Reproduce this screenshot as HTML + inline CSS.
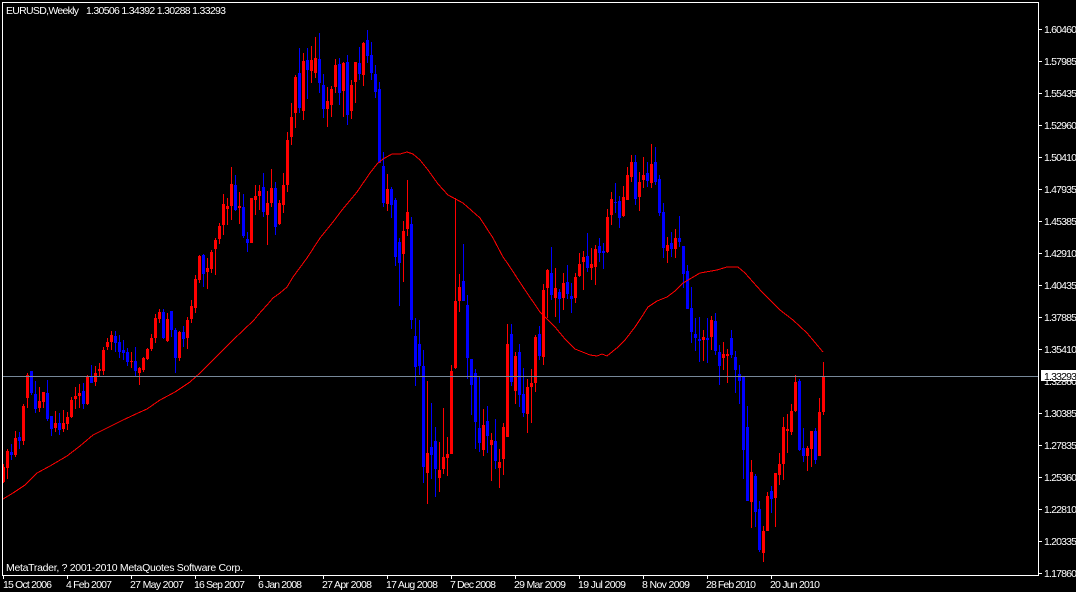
<!DOCTYPE html>
<html><head><meta charset="utf-8"><title>EURUSD,Weekly</title>
<style>
html,body{margin:0;padding:0;background:#000;width:1076px;height:592px;overflow:hidden}
svg{display:block;position:absolute;left:0;top:0}
text{font-family:"Liberation Sans",sans-serif;font-size:10.5px;fill:#fff}
</style></head><body>
<svg width="1076" height="592" viewBox="0 0 1076 592" shape-rendering="crispEdges">
<rect width="1076" height="592" fill="#000"/>
<!-- red wicks -->
<path fill="none" stroke="#f00" stroke-width="1" d="M3.5 464V483M7.5 449V479M15.5 431V457M23.5 404V445M27.5 373V408M39.5 387V412M43.5 392V408M55.5 411V432M63.5 410V432M67.5 412V430M71.5 397V418M75.5 387V409M79.5 384V408M87.5 375V405M95.5 366V386M99.5 363V377M103.5 347V375M107.5 338V350M111.5 331V350M131.5 352V368M139.5 367V385M143.5 357V372M147.5 348V360M151.5 334V351M155.5 314V343M159.5 309V323M167.5 313V342M179.5 331V361M187.5 317V349M191.5 300V323M195.5 275V313M199.5 255V283M207.5 258V289M211.5 250V273M215.5 238V275M219.5 223V244M223.5 194V235M227.5 198V225M231.5 167V220M239.5 192V224M251.5 198V243M255.5 185V215M259.5 185V210M267.5 191V245M271.5 169V207M279.5 200V225M283.5 173V213M287.5 132V192M291.5 103V145M295.5 75V128M303.5 53V120M311.5 46V83M315.5 37V78M327.5 87V127M331.5 86V117M335.5 59V93M343.5 62V117M351.5 80V119M355.5 62V103M363.5 42V86M387.5 174V211M403.5 221V282M407.5 180V236M427.5 381V504M439.5 442V492M443.5 408V474M447.5 437V476M451.5 365V454M455.5 198V369M459.5 274V312M483.5 409V456M491.5 433V481M499.5 449V488M503.5 423V475M507.5 324V437M515.5 352V404M527.5 379V433M531.5 369V423M535.5 335V392M543.5 284V365M547.5 269V318M555.5 268V317M563.5 273V310M575.5 273V303M579.5 253V277M583.5 251V290M591.5 248V280M595.5 245V285M607.5 209V253M611.5 192V225M623.5 186V217M627.5 167V200M631.5 155V182M639.5 172V211M643.5 157V188M651.5 144V188M667.5 237V263M675.5 229V258M703.5 330V361M711.5 316V350M723.5 342V370M727.5 349V383M751.5 460V528M763.5 526V562M767.5 492V531M775.5 473V527M779.5 453V485M783.5 417V480M787.5 414V453M791.5 404V435M795.5 375V412M807.5 446V471M811.5 431V467M819.5 398V456M823.5 362V415"/>
<!-- red bodies -->
<path fill="none" stroke="#f00" stroke-width="3" d="M3.5 467V482M7.5 451V468M15.5 438V455M23.5 406V441M27.5 375V398M39.5 401V408M43.5 392V402M55.5 423V428M63.5 423V429M67.5 417V424M71.5 400V417M75.5 396V399M79.5 393V396M87.5 377V404M95.5 373V382M99.5 369V371M103.5 350V371M107.5 342V347M111.5 335V342M131.5 361V362M139.5 368V373M143.5 358V370M147.5 349V359M151.5 338V349M155.5 318V338M159.5 312V319M167.5 319V341M179.5 332V358M187.5 320V338M191.5 306V319M195.5 279V308M199.5 256V280M207.5 268V272M211.5 252V269M215.5 240V249M219.5 226V239M223.5 204V225M227.5 206V209M231.5 184V206M239.5 206V208M251.5 198V243M255.5 196V200M259.5 191V196M267.5 203V215M271.5 188V203M279.5 203V224M283.5 185V205M287.5 140V185M291.5 117V137M295.5 77V113M303.5 61V111M311.5 60V71M315.5 58V73M327.5 101V109M331.5 89V105M335.5 65V87M343.5 63V91M351.5 85V111M355.5 62V82M363.5 43V75M387.5 189V204M403.5 231V254M407.5 212V229M427.5 453V473M439.5 470V478M443.5 457V469M447.5 454V458M451.5 371V454M455.5 301V368M459.5 287V301M483.5 425V450M491.5 440V445M499.5 462V468M503.5 427V459M507.5 344V437M515.5 356V391M527.5 387V414M531.5 383V387M535.5 337V383M543.5 290V357M547.5 270V288M555.5 288V298M563.5 283V298M575.5 277V298M579.5 264V276M583.5 257V262M591.5 264V268M595.5 249V267M607.5 217V252M611.5 199V215M623.5 197V216M627.5 175V200M631.5 162V177M639.5 182V197M643.5 175V180M651.5 164V183M667.5 245V251M675.5 238V249M703.5 337V340M711.5 320V337M723.5 354V358M727.5 354V356M751.5 472V502M763.5 531V553M767.5 496V531M775.5 473V498M779.5 464V475M783.5 427V464M787.5 429V431M791.5 411V432M795.5 382V411M807.5 448V456M811.5 431V449M819.5 412V456M823.5 376V412"/>
<!-- blue wicks -->
<path fill="none" stroke="#00f" stroke-width="1" d="M11.5 444V460M19.5 432V449M31.5 371V395M35.5 381V413M47.5 380V421M51.5 416V436M59.5 413V435M83.5 383V409M91.5 365V383M115.5 331V352M119.5 335V358M123.5 340V360M127.5 348V366M135.5 347V377M163.5 309V339M171.5 311V337M175.5 328V373M183.5 326V347M203.5 254V287M235.5 175V211M243.5 194V238M247.5 232V252M263.5 173V217M275.5 182V235M299.5 48V113M307.5 48V99M319.5 33V93M323.5 74V118M339.5 58V105M347.5 55V125M359.5 47V80M367.5 30V63M371.5 42V80M375.5 65V98M379.5 82V163M383.5 152V207M391.5 187V218M395.5 198V266M399.5 238V306M411.5 217V329M415.5 318V386M419.5 320V375M423.5 350V483M431.5 403V479M435.5 427V497M463.5 244V301M467.5 295V379M471.5 359V415M475.5 369V449M479.5 377V452M487.5 406V453M495.5 419V469M511.5 324V386M519.5 344V407M523.5 368V417M539.5 326V360M551.5 247V300M559.5 289V323M567.5 265V299M571.5 283V313M587.5 233V272M599.5 238V262M603.5 243V269M615.5 183V213M619.5 196V228M635.5 155V205M647.5 162V187M655.5 147V185M659.5 175V216M663.5 203V258M671.5 232V257M679.5 216V247M683.5 246V288M687.5 265V309M691.5 287V343M695.5 318V351M699.5 317V362M707.5 318V363M715.5 313V355M719.5 345V385M731.5 330V358M735.5 351V393M739.5 365V404M743.5 376V479M747.5 406V501M755.5 474V527M759.5 501V552M771.5 486V513M799.5 379V451M803.5 428V462M815.5 428V464"/>
<!-- blue bodies -->
<path fill="none" stroke="#00f" stroke-width="3" d="M11.5 452V455M19.5 437V441M31.5 371V393M35.5 394V409M47.5 393V419M51.5 416V429M59.5 423V430M83.5 391V404M91.5 377V383M115.5 336V343M119.5 342V352M123.5 350V353M127.5 352V362M135.5 361V371M163.5 312V338M171.5 311V330M175.5 330V358M183.5 332V339M203.5 255V274M235.5 185V210M243.5 207V236M247.5 239V243M263.5 187V212M275.5 188V227M299.5 73V108M307.5 60V70M319.5 59V83M323.5 85V109M339.5 64V93M347.5 62V115M359.5 63V74M367.5 40V56M371.5 55V73M375.5 74V92M379.5 89V163M383.5 166V203M391.5 189V205M395.5 200V257M399.5 242V263M411.5 224V320M415.5 336V367M419.5 344V366M423.5 366V467M431.5 447V455M435.5 441V469M463.5 281V301M467.5 305V358M471.5 359V385M475.5 373V422M479.5 428V443M487.5 421V436M495.5 441V461M511.5 334V382M519.5 352V395M523.5 394V413M539.5 334V356M551.5 273V295M559.5 292V299M567.5 282V294M571.5 296V299M587.5 256V268M599.5 246V253M603.5 251V253M615.5 202V203M619.5 201V218M635.5 162V199M647.5 173V181M655.5 162V182M659.5 179V213M663.5 212V248M671.5 243V249M679.5 238V242M683.5 246V274M687.5 271V309M691.5 308V332M695.5 334V338M699.5 339V341M707.5 338V340M715.5 321V351M719.5 352V366M731.5 338V355M735.5 357V370M739.5 374V381M743.5 376V450M747.5 427V501M755.5 476V512M759.5 509V550M771.5 491V499M799.5 381V450M803.5 448V456M815.5 431V460"/>
<!-- moving average -->
<polyline fill="none" stroke="#f00" stroke-width="1" points="3,499 13,493 25,485 37,473 50,466 67,456 80,446 93,435 107,428 123,420 138,413 147,409 160,400 175,392 190,382 200,373 233,340 254,320 258,315 267,305 273,298 280,293 287,287 293,277 307,258 320,238 333,222 342,210 357,192 370,173 377,164 383,159 392,154 400,154 407,152 413,154 420,160 428,170 438,184 448,195 463,203 480,218 493,238 503,257 508,264 523,287 540,312 555,327 565,339 575,349 590,355 597,356 602,354 607,356 618,347 625,340 635,327 641,318 648,307 657,301 667,297 675,291 683,283 700,273 717,270 727,267 738,267 745,273 753,282 762,292 780,310 793,320 807,333 823,352"/>
<!-- price line -->
<rect x="3" y="376" width="1035" height="1" fill="#778899"/>
<!-- frame -->
<rect x="2" y="2" width="1037" height="1" fill="#fff"/>
<rect x="2" y="575" width="1037" height="1" fill="#fff"/>
<rect x="2" y="2" width="1" height="574" fill="#fff"/>
<rect x="1038" y="2" width="1" height="574" fill="#fff"/>
<!-- price ticks -->
<path fill="none" stroke="#fff" stroke-width="1" d="M1039 29.5h3M1039 61.5h3M1039 93.5h3M1039 125.5h3M1039 157.5h3M1039 189.5h3M1039 221.5h3M1039 253.5h3M1039 285.5h3M1039 317.5h3M1039 349.5h3M1039 413.5h3M1039 445.5h3M1039 477.5h3M1039 509.5h3M1039 541.5h3M1039 573.5h3M3.5 576v3M67.5 576v3M131.5 576v3M195.5 576v3M259.5 576v3M323.5 576v3M387.5 576v3M451.5 576v3M515.5 576v3M579.5 576v3M643.5 576v3M707.5 576v3M771.5 576v3"/>
<text x="1044" y="33" textLength="33" lengthAdjust="spacing">1.60460</text>
<text x="1044" y="65" textLength="33" lengthAdjust="spacing">1.57985</text>
<text x="1044" y="97" textLength="33" lengthAdjust="spacing">1.55435</text>
<text x="1044" y="129" textLength="33" lengthAdjust="spacing">1.52960</text>
<text x="1044" y="161" textLength="33" lengthAdjust="spacing">1.50410</text>
<text x="1044" y="193" textLength="33" lengthAdjust="spacing">1.47935</text>
<text x="1044" y="225" textLength="33" lengthAdjust="spacing">1.45385</text>
<text x="1044" y="257" textLength="33" lengthAdjust="spacing">1.42910</text>
<text x="1044" y="289" textLength="33" lengthAdjust="spacing">1.40435</text>
<text x="1044" y="321" textLength="33" lengthAdjust="spacing">1.37885</text>
<text x="1044" y="353" textLength="33" lengthAdjust="spacing">1.35410</text>
<text x="1044" y="385" textLength="33" lengthAdjust="spacing">1.32860</text>
<text x="1044" y="417" textLength="33" lengthAdjust="spacing">1.30385</text>
<text x="1044" y="449" textLength="33" lengthAdjust="spacing">1.27835</text>
<text x="1044" y="481" textLength="33" lengthAdjust="spacing">1.25360</text>
<text x="1044" y="513" textLength="33" lengthAdjust="spacing">1.22810</text>
<text x="1044" y="545" textLength="33" lengthAdjust="spacing">1.20335</text>
<text x="1044" y="577" textLength="33" lengthAdjust="spacing">1.17860</text>
<rect x="1041" y="370" width="35" height="11" fill="#fff"/>
<text x="1044" y="380" textLength="33" lengthAdjust="spacing" style="fill:#000">1.33293</text>
<text x="6" y="14" textLength="73" lengthAdjust="spacing">EURUSD,Weekly</text>
<text x="86" y="14" textLength="140" lengthAdjust="spacing">1.30506 1.34392 1.30288 1.33293</text>
<text x="6" y="571" textLength="237" lengthAdjust="spacing">MetaTrader, ? 2001-2010 MetaQuotes Software Corp.</text>
<text x="3" y="588" textLength="49" lengthAdjust="spacing">15 Oct 2006</text>
<text x="66" y="588" textLength="46" lengthAdjust="spacing">4 Feb 2007</text>
<text x="130" y="588" textLength="54" lengthAdjust="spacing">27 May 2007</text>
<text x="194" y="588" textLength="51" lengthAdjust="spacing">16 Sep 2007</text>
<text x="258" y="588" textLength="44" lengthAdjust="spacing">6 Jan 2008</text>
<text x="322" y="588" textLength="50" lengthAdjust="spacing">27 Apr 2008</text>
<text x="386" y="588" textLength="52" lengthAdjust="spacing">17 Aug 2008</text>
<text x="450" y="588" textLength="46" lengthAdjust="spacing">7 Dec 2008</text>
<text x="514" y="588" textLength="52" lengthAdjust="spacing">29 Mar 2009</text>
<text x="578" y="588" textLength="48" lengthAdjust="spacing">19 Jul 2009</text>
<text x="642" y="588" textLength="48" lengthAdjust="spacing">8 Nov 2009</text>
<text x="706" y="588" textLength="50" lengthAdjust="spacing">28 Feb 2010</text>
<text x="770" y="588" textLength="50" lengthAdjust="spacing">20 Jun 2010</text>
</svg>
</body></html>
